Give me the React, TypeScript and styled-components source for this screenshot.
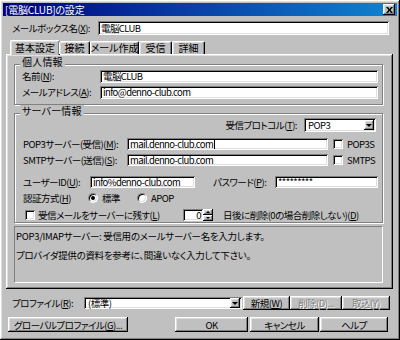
import React from "react";
import styled, { createGlobalStyle, css } from "styled-components";

const GlobalStyle = createGlobalStyle`
  html, body { margin: 0; padding: 0; background: #c0c0c0; }
  body {
    font-family: "Noto Sans CJK JP", "Noto Sans", sans-serif;
    font-size: 9.5px;
    letter-spacing: -0.5px;
    color: #000;
    font-feature-settings: "palt" 1;
  }
  * { box-sizing: border-box; }
`;

const raised = css`
  box-shadow: inset -1px -1px #000, inset 1px 1px #fff, inset -2px -2px #808080, inset 2px 2px #dfdfdf;
`;
const sunken = css`
  box-shadow: inset 1px 1px #808080, inset -1px -1px #fff, inset 2px 2px #000, inset -2px -2px #dfdfdf;
`;

const Window = styled.div`
  width: 400px;
  height: 340px;
  background: #c0c0c0;
  padding: 3px;
  ${raised};
  display: flex;
  flex-direction: column;
  overflow: hidden;
`;

const TitleBar = styled.div`
  height: 13px;
  flex-shrink: 0;
  display: flex;
  align-items: center;
  justify-content: space-between;
  padding: 0 2px 0 2px;
  background: linear-gradient(90deg, #000080, #1084d0);
  color: #fff;
  font-size: 10px;
  letter-spacing: -0.2px;
  line-height: 13px;
  white-space: nowrap;
`;

const CloseBtn = styled.div`
  width: 12px;
  height: 11px;
  background: #c0c0c0;
  ${raised};
  display: grid;
  place-items: center;
`;

const Body = styled.div`
  display: flex;
  flex-direction: column;
  padding: 0 4px 0 3px;
`;

const Row = styled.div<{ $mt?: number; $h?: number; $pl?: number; $end?: boolean }>`
  display: flex;
  align-items: center;
  justify-content: ${(p) => (p.$end ? "flex-end" : "flex-start")};
  flex-shrink: 0;
  margin-top: ${(p) => p.$mt ?? 0}px;
  height: ${(p) => p.$h ?? 13}px;
  padding-left: ${(p) => p.$pl ?? 0}px;
  white-space: nowrap;
`;

const Label = styled.span<{ $w?: number; $ml?: number }>`
  width: ${(p) => (p.$w ? `${p.$w}px` : "auto")};
  margin-left: ${(p) => p.$ml ?? 0}px;
  flex-shrink: 0;
  white-space: nowrap;
  line-height: 11px;
`;

const TextBox = styled.div<{ $w: number; $h?: number }>`
  width: ${(p) => p.$w}px;
  height: ${(p) => p.$h ?? 13}px;
  flex-shrink: 0;
  background: #fff;
  ${sunken};
  padding: 0 3px;
  display: flex;
  align-items: center;
  overflow: hidden;
  white-space: nowrap;
  font-size: 9.5px;
  line-height: 11px;
  letter-spacing: -0.6px;
`;

const Caret = styled.span`
  display: inline-block;
  width: 1px;
  height: 9px;
  background: #000;
  margin-left: 1px;
`;

const Combo = styled.div<{ $w: number; $h?: number; $ml?: number }>`
  width: ${(p) => p.$w}px;
  height: ${(p) => p.$h ?? 14}px;
  margin-left: ${(p) => p.$ml ?? 0}px;
  flex-shrink: 0;
  background: #fff;
  ${sunken};
  padding: 2px 2px 2px 4px;
  display: flex;
  align-items: center;
  justify-content: space-between;
  line-height: 10px;
`;

const DropBtn = styled.div`
  width: 10px;
  height: 10px;
  background: #c0c0c0;
  ${raised};
  display: grid;
  place-items: center;
`;

const Arrow = styled.span`
  width: 0;
  height: 0;
  border-left: 3px solid transparent;
  border-right: 3px solid transparent;
  border-top: 3px solid #000;
`;

const TabStrip = styled.div`
  display: flex;
  align-items: flex-end;
  height: 14px;
  margin-top: 5px;
  padding-left: 5px;
  position: relative;
  z-index: 2;
`;

const Tab = styled.div<{ $active?: boolean; $w: number }>`
  width: ${(p) => p.$w}px;
  height: ${(p) => (p.$active ? 15 : 13)}px;
  margin: 0 ${(p) => (p.$active ? -1 : 0)}px ${(p) => (p.$active ? -1 : 0)}px;
  background: #c0c0c0;
  border-top: 1px solid #fff;
  border-left: 1px solid #fff;
  border-right: 1px solid #000;
  border-radius: 2px 2px 0 0;
  box-shadow: inset -1px 0 #808080, inset 1px 1px #dfdfdf;
  display: flex;
  align-items: center;
  justify-content: center;
  line-height: 12px;
  font-size: 10px;
  letter-spacing: 0;
  white-space: nowrap;
`;

const Panel = styled.div`
  height: 235px;
  flex-shrink: 0;
  padding: 2px 10px 0 8px;
  ${raised};
  display: flex;
  flex-direction: column;
`;

const Group = styled.div<{ $mt: number; $pad: string }>`
  position: relative;
  margin-top: ${(p) => p.$mt}px;
  border: 1px solid #808080;
  box-shadow: inset 1px 1px #fff, 1px 1px #fff;
  padding: ${(p) => p.$pad};
  display: flex;
  flex-direction: column;
  flex-shrink: 0;
`;

const Legend = styled.span`
  position: absolute;
  top: -9px;
  left: 5px;
  padding: 0 2px;
  background: #c0c0c0;
  line-height: 12px;
  font-size: 10px;
  letter-spacing: 0.2px;
`;

const CheckBox = styled.span`
  width: 10px;
  height: 10px;
  flex-shrink: 0;
  background: #fff;
  ${sunken};
`;

const Radio = styled.span<{ $on?: boolean }>`
  width: 10px;
  height: 10px;
  flex-shrink: 0;
  border-radius: 50%;
  background: #fff;
  border: 1px solid;
  border-color: #808080 #fff #fff #808080;
  box-shadow: inset 1px 1px #000, inset -1px -1px #dfdfdf;
  display: grid;
  place-items: center;
  &::after {
    content: "";
    width: 4px;
    height: 4px;
    border-radius: 50%;
    background: ${(p) => (p.$on ? "#000" : "transparent")};
  }
`;

const Option = styled.span<{ $w?: number; $ml?: number }>`
  display: flex;
  align-items: center;
  gap: 4px;
  width: ${(p) => (p.$w ? `${p.$w}px` : "auto")};
  margin-left: ${(p) => p.$ml ?? 0}px;
  flex-shrink: 0;
`;

const SpinBox = styled.div`
  display: flex;
  height: 12px;
  flex-shrink: 0;
`;

const SpinInput = styled.div`
  width: 20px;
  height: 12px;
  background: #fff;
  ${sunken};
  display: flex;
  align-items: center;
  justify-content: flex-end;
  padding-right: 2px;
`;

const SpinBtns = styled.div`
  width: 10px;
  display: flex;
  flex-direction: column;
`;

const SpinBtn = styled.div<{ $up?: boolean }>`
  height: 6px;
  background: #c0c0c0;
  ${raised};
  display: grid;
  place-items: center;
  &::after {
    content: "";
    border-left: 2px solid transparent;
    border-right: 2px solid transparent;
    ${(p) => (p.$up ? "border-bottom: 2px solid #000;" : "border-top: 2px solid #000;")}
  }
`;

const Desc = styled.div`
  margin-top: 3px;
  height: 57px;
  flex-shrink: 0;
  border-top: 1px solid #808080;
  border-left: 1px solid #808080;
  border-right: 1px solid #fff;
  border-bottom: 1px solid #fff;
  padding: 0 2px 0 1px;
  line-height: 19px;
  letter-spacing: -0.3px;
  white-space: nowrap;
`;

const Button = styled.div<{ $w: number; $h?: number; $ml?: number; $disabled?: boolean }>`
  width: ${(p) => p.$w}px;
  height: ${(p) => p.$h ?? 15}px;
  margin-left: ${(p) => p.$ml ?? 0}px;
  flex-shrink: 0;
  background: #c0c0c0;
  ${raised};
  display: flex;
  align-items: center;
  justify-content: center;
  white-space: nowrap;
  line-height: 12px;
  color: ${(p) => (p.$disabled ? "#808080" : "#000")};
  text-shadow: ${(p) => (p.$disabled ? "1px 1px #fff" : "none")};
`;

export default function App() {
  return (
    <>
      <GlobalStyle />
      <Window>
        <TitleBar>
          <span>[電脳CLUB]の設定</span>
          <CloseBtn>
            <svg width="7" height="6" viewBox="0 0 7 6">
              <path d="M0 0h2l1.5 2 1.5-2h2l-2.5 3 2.5 3h-2l-1.5-2-1.5 2h-2l2.5-3z" fill="#000" />
            </svg>
          </CloseBtn>
        </TitleBar>
        <Body>
          <Row $mt={5} $h={14} $pl={6}>
            <Label $w={86}>メールボックス名(<u>X</u>):</Label>
            <TextBox $w={291} $h={14}>電脳CLUB</TextBox>
          </Row>
          <TabStrip>
            <Tab $active $w={50}>基本設定</Tab>
            <Tab $w={31}>接続</Tab>
            <Tab $w={49}>メール作成</Tab>
            <Tab $w={33}>受信</Tab>
            <Tab $w={33}>詳細</Tab>
          </TabStrip>
          <Panel>
            <Group $mt={8} $pad="5px 4px 5px 7px">
              <Legend>個人情報</Legend>
              <Row>
                <Label $w={78}>名前(<u>N</u>):</Label>
                <TextBox $w={278}>電脳CLUB</TextBox>
              </Row>
              <Row $mt={3}>
                <Label $w={78}>メールアドレス(<u>A</u>):</Label>
                <TextBox $w={278}>info@denno-club.com</TextBox>
              </Row>
            </Group>
            <Group $mt={8} $pad="4px 6px 1px 8px">
              <Legend>サーバー情報</Legend>
              <Row $h={14} $end>
                <Label>受信プロトコル(<u>T</u>):</Label>
                <Combo $w={72} $ml={7}>
                  <span>POP3</span>
                  <DropBtn>
                    <Arrow />
                  </DropBtn>
                </Combo>
              </Row>
              <Row $mt={6} $h={12}>
                <Label $w={104}>POP3サーバー(受信)(<u>M</u>):</Label>
                <TextBox $w={201} $h={12}>
                  mail.denno-club.com
                  <Caret />
                </TextBox>
                <Option $ml={5}>
                  <CheckBox />
                  POP3S
                </Option>
              </Row>
              <Row $mt={4} $h={12}>
                <Label $w={104}>SMTPサーバー(送信)(<u>S</u>):</Label>
                <TextBox $w={201} $h={12}>mail.denno-club.com</TextBox>
                <Option $ml={5}>
                  <CheckBox />
                  SMTPS
                </Option>
              </Row>
              <Row $mt={10} $h={12}>
                <Label $w={67}>ユーザーID(<u>U</u>):</Label>
                <TextBox $w={105} $h={12}>info%denno-club.com</TextBox>
                <Label $w={62} $ml={18}>
                  パスワード(<u>P</u>):
                </Label>
                <TextBox $w={103} $h={12}>*********</TextBox>
              </Row>
              <Row $mt={4} $h={12}>
                <Label $w={65}>認証方式(<u>H</u>)</Label>
                <Option $w={49}>
                  <Radio $on />
                  標準
                </Option>
                <Option>
                  <Radio />
                  APOP
                </Option>
              </Row>
              <Row $mt={5} $h={12} $pl={2}>
                <CheckBox />
                <Label $w={145} $ml={3}>
                  受信メールをサーバーに残す(<u>L</u>)
                </Label>
                <SpinBox>
                  <SpinInput>0</SpinInput>
                  <SpinBtns>
                    <SpinBtn $up />
                    <SpinBtn />
                  </SpinBtns>
                </SpinBox>
                <Label $ml={10}>
                  日後に削除(0の場合削除しない)(<u>D</u>)
                </Label>
              </Row>
            </Group>
            <Desc>
              <div>POP3/IMAPサーバー: 受信用のメールサーバー名を入力します。</div>
              <div>プロバイダ提供の資料を参考に、間違いなく入力して下さい。</div>
            </Desc>
          </Panel>
          <Row $mt={7} $h={14} $pl={6}>
            <Label $w={72}>プロファイル(<u>R</u>):</Label>
            <Combo $w={158} $h={12} style={{ paddingTop: 1, paddingBottom: 1 }}>
              <span>(標準)</span>
              <DropBtn>
                <Arrow />
              </DropBtn>
            </Combo>
            <Button $w={47} $h={14} $ml={1}>新規(<u>W</u>)</Button>
            <Button $w={52} $h={14} $disabled>削除(D)...</Button>
            <Button $w={48} $h={14} $disabled>取込(Y)</Button>
          </Row>
          <Row $mt={7} $h={15} $pl={2}>
            <Button $w={120}>グローバルプロファイル(<u>G</u>)...</Button>
            <Button $w={73} $ml={47}>OK</Button>
            <Button $w={69} $ml={2}>キャンセル</Button>
            <Button $w={68} $ml={1}>ヘルプ</Button>
          </Row>
        </Body>
      </Window>
    </>
  );
}
